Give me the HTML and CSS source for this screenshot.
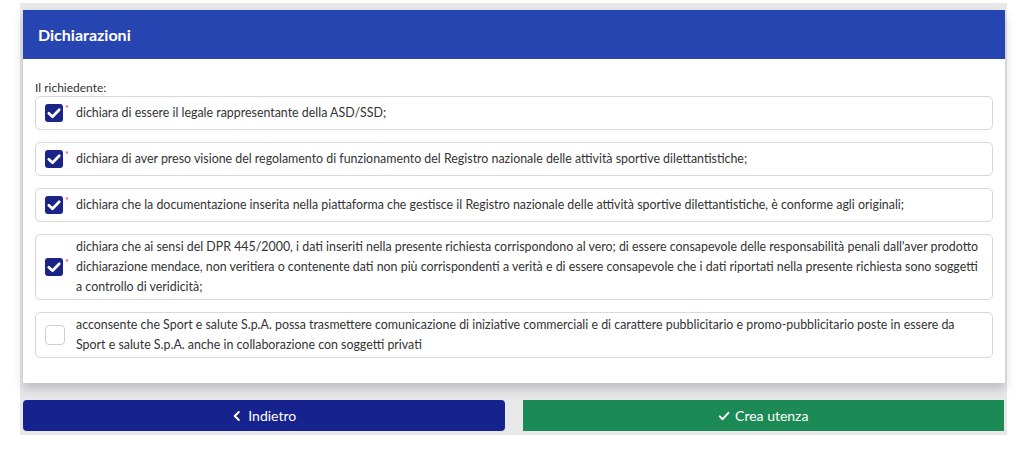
FILE: index.html
```html
<!DOCTYPE html>
<html lang="it">
<head>
    <meta charset="UTF-8">
    <title>Dichiarazioni</title>
    <link rel="stylesheet" href="styles.css">
</head>
<body>
    <div class="frame">
        <div class="card">
            <div class="card-header">Dichiarazioni</div>
            <div class="card-body">
                <div class="label">Il richiedente:</div>

                <div class="item">
                    <span class="mark">
                        <span class="check checked"><svg viewBox="0 0 12 12"><path d="M2.5 6.2 L5 8.5 L9.5 3.8" /></svg></span>
                        <span class="req">*</span>
                    </span>
                    <span class="text">dichiara di essere il legale rappresentante della ASD/SSD;</span>
                </div>

                <div class="item">
                    <span class="mark">
                        <span class="check checked"><svg viewBox="0 0 12 12"><path d="M2.5 6.2 L5 8.5 L9.5 3.8" /></svg></span>
                        <span class="req">*</span>
                    </span>
                    <span class="text">dichiara di aver preso visione del regolamento di funzionamento del Registro nazionale delle attività sportive dilettantistiche;</span>
                </div>

                <div class="item">
                    <span class="mark">
                        <span class="check checked"><svg viewBox="0 0 12 12"><path d="M2.5 6.2 L5 8.5 L9.5 3.8" /></svg></span>
                        <span class="req">*</span>
                    </span>
                    <span class="text">dichiara che la documentazione inserita nella piattaforma che gestisce il Registro nazionale delle attività sportive dilettantistiche, è conforme agli originali;</span>
                </div>

                <div class="item">
                    <span class="mark">
                        <span class="check checked"><svg viewBox="0 0 12 12"><path d="M2.5 6.2 L5 8.5 L9.5 3.8" /></svg></span>
                        <span class="req">*</span>
                    </span>
                    <span class="text">dichiara che ai sensi del DPR 445/2000, i dati inseriti nella presente richiesta corrispondono al vero; di essere consapevole delle responsabilità penali dall'aver prodotto<br>dichiarazione mendace, non veritiera o contenente dati non più corrispondenti a verità e di essere consapevole che i dati riportati nella presente richiesta sono soggetti<br>a controllo di veridicità;</span>
                </div>

                <div class="item">
                    <span class="mark">
                        <span class="check empty"></span>
                        <span class="req"></span>
                    </span>
                    <span class="text">acconsente che Sport e salute S.p.A. possa trasmettere comunicazione di iniziative commerciali e di carattere pubblicitario e promo-pubblicitario poste in essere da<br>Sport e salute S.p.A. anche in collaborazione con soggetti privati</span>
                </div>
            </div>
        </div>

        <div class="actions">
            <button type="button" class="btn btn-back">
                <svg class="ico" viewBox="0 0 12 12"><path d="M7.8 2 L3.8 6 L7.8 10" /></svg>
                Indietro
            </button>
            <button type="button" class="btn btn-create">
                <svg class="ico" viewBox="0 0 12 12"><path d="M1.8 6.4 L4.6 9.2 L10.4 2.8" /></svg>
                Crea utenza
            </button>
        </div>
    </div>
</body>
</html>
```

FILE: styles.css
```css
body {
    font-family: Lato, "Open Sans", sans-serif;
    margin: 0;
    padding: 0;
    background-color: #fff;
    color: #333;
}

.frame {
    margin: 3px 17px 0 20px;
    padding: 7px 2px 4px 3px;
    background-color: #e8e8eb;
}

.card {
    background-color: #fff;
    box-shadow: 0 6px 10px rgba(0, 0, 0, 0.18);
}

.card-header {
    height: 49px;
    display: flex;
    align-items: center;
    padding-left: 15px;
    background-color: #2745b1;
    color: #fff;
    font-size: 16px;
    font-weight: bold;
}

.card-body {
    padding: 21px 12px 25px 12px;
}

.label {
    font-size: 12px;
    line-height: 16px;
}

.item {
    display: flex;
    align-items: center;
    border: 1px solid #d8d8d8;
    border-radius: 5px;
    padding: 2px 2px 2px 9px;
    margin-bottom: 12px;
    font-size: 12.4px;
    line-height: 20px;
}

.item:last-child {
    margin-bottom: 0;
}

.mark {
    flex: none;
    display: flex;
    align-items: flex-start;
    margin: 5px 0;
}

.check {
    flex: none;
    width: 18px;
    height: 18px;
    border-radius: 3px;
    box-sizing: border-box;
}

.check.checked {
    background-color: #1a2386;
}

.check.checked svg {
    display: block;
    width: 18px;
    height: 18px;
}

.check.checked path {
    fill: none;
    stroke: #fff;
    stroke-width: 1.8;
    stroke-linecap: round;
    stroke-linejoin: round;
}

.check.empty {
    width: 20px;
    height: 20px;
    margin: -1px 0;
    border: 1px solid #cfcfcf;
    border-radius: 4px;
}

.req {
    flex: none;
    width: 11px;
    padding-left: 2px;
    color: #e53935;
    font-size: 9px;
    line-height: 9px;
}

.check.empty + .req {
    margin-left: -2px;
}

.item .text {
    flex: 1;
}

.actions {
    display: flex;
    gap: 18px;
    margin-top: 17px;
    margin-right: 1px;
}

.btn {
    flex: 1;
    height: 31px;
    border: none;
    border-radius: 4px;
    color: #fff;
    font-family: Lato, "Open Sans", sans-serif;
    font-size: 14px;
    display: flex;
    align-items: center;
    justify-content: center;
    gap: 5px;
    cursor: pointer;
}

.btn-back {
    background-color: #16238f;
}

.btn-create {
    background-color: #1b8a55;
    border-radius: 0;
}

.ico {
    width: 12px;
    height: 12px;
}

.ico path {
    fill: none;
    stroke: #fff;
    stroke-width: 2;
    stroke-linecap: round;
    stroke-linejoin: round;
}
```
